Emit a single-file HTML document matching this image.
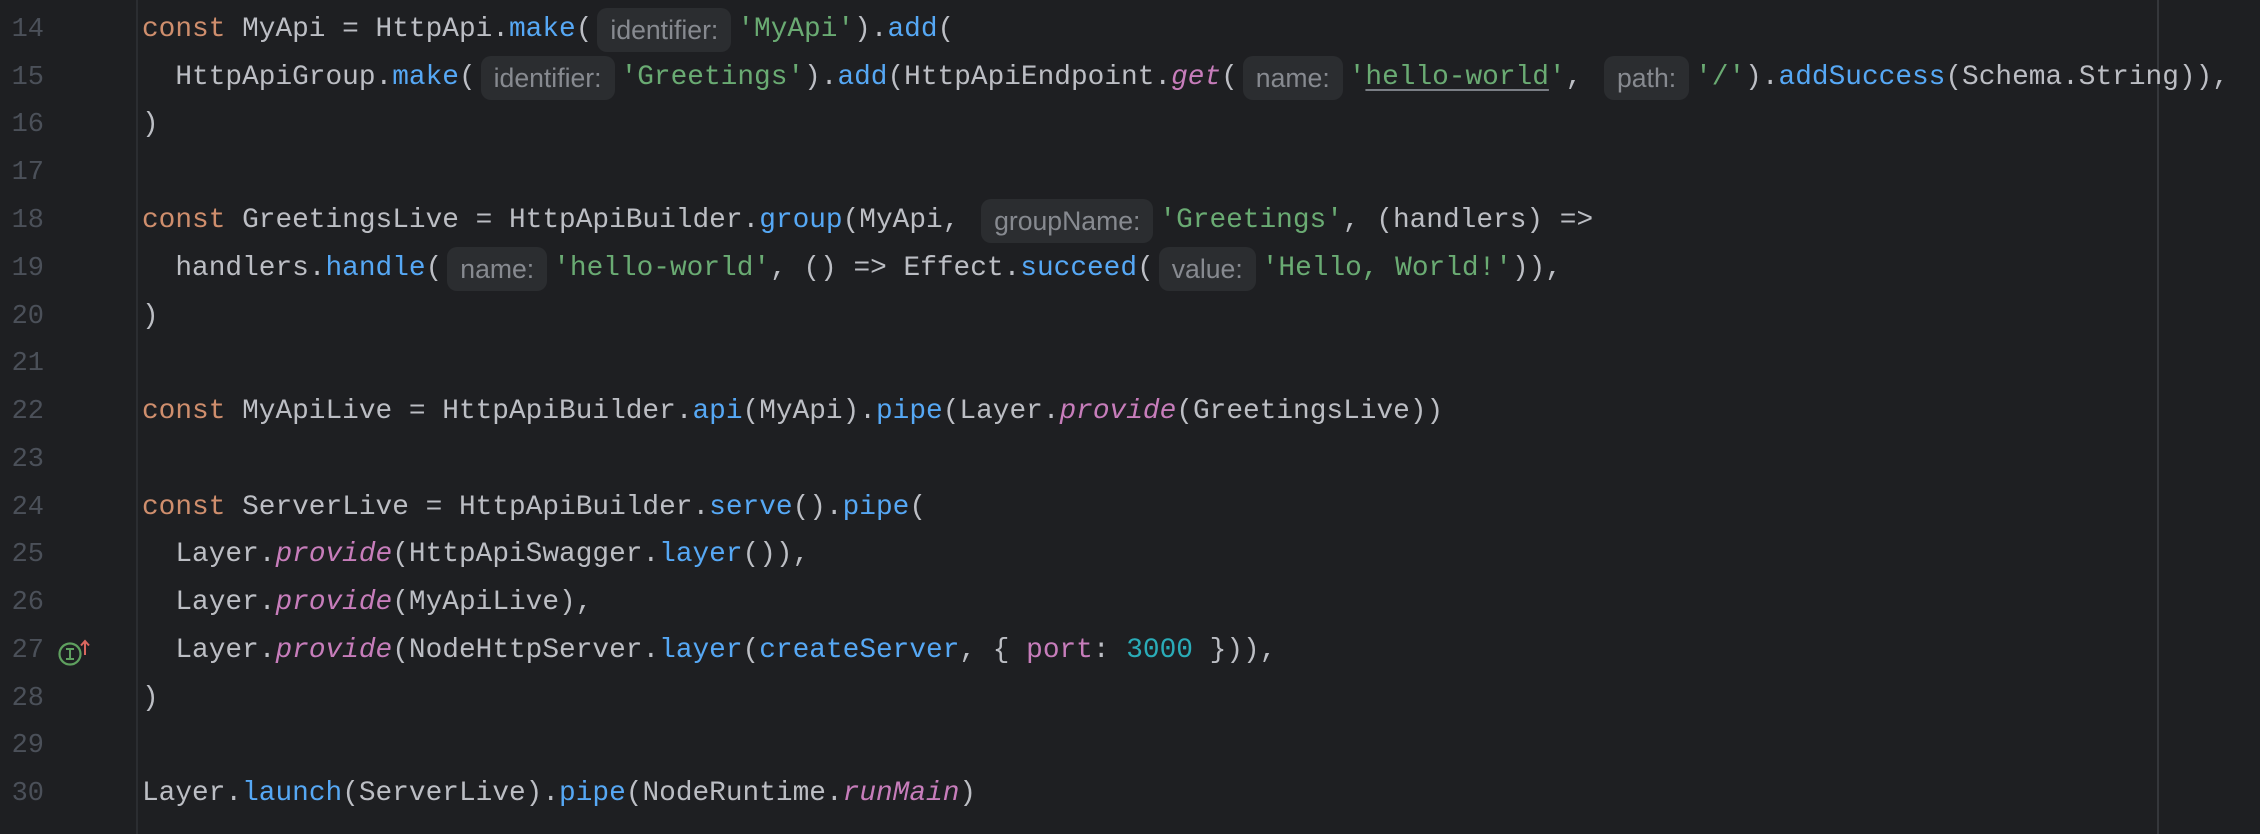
<!DOCTYPE html>
<html><head><meta charset="utf-8">
<style>
html,body{margin:0;padding:0;}
body{width:2260px;height:834px;background:#1e1f22;position:relative;overflow:hidden;
font-family:"Liberation Mono","DejaVu Sans Mono",monospace;font-size:27.8px;color:#bcbec4;}
.gut{position:absolute;left:136px;top:0;width:2px;height:834px;background:#2b2d31;}
.marg{position:absolute;left:2157px;top:0;width:2px;height:834px;background:#35373b;}
.ln{position:absolute;left:0;width:44px;text-align:right;color:#4b5059;height:48px;line-height:48px;font-size:27px;}
.l{position:absolute;left:142px;height:48px;line-height:48px;white-space:pre;}
.k{color:#cf8e6d}.f{color:#56a8f5}.s{color:#6aab73}.p{color:#c77dbb;font-style:italic}.n{color:#2aacb8}.pr{color:#c77dbb}
.u{text-decoration:underline;text-decoration-color:#7a7e85;text-underline-offset:5px;text-decoration-thickness:2px}
.h{display:inline-block;font-family:"Liberation Sans",sans-serif;font-size:26.6px;color:#878a90;background:#2b2d30;
border-radius:10px;height:44px;line-height:44px;padding:0 13px;margin:2px 6px 0 5px;vertical-align:top;}
</style></head><body>
<div class="gut"></div><div class="marg"></div>

<div class="ln" style="top:6px">14</div>
<div class="ln" style="top:54px">15</div>
<div class="ln" style="top:101px">16</div>
<div class="ln" style="top:149px">17</div>
<div class="ln" style="top:197px">18</div>
<div class="ln" style="top:245px">19</div>
<div class="ln" style="top:293px">20</div>
<div class="ln" style="top:340px">21</div>
<div class="ln" style="top:388px">22</div>
<div class="ln" style="top:436px">23</div>
<div class="ln" style="top:484px">24</div>
<div class="ln" style="top:531px">25</div>
<div class="ln" style="top:579px">26</div>
<div class="ln" style="top:627px">27</div>
<div class="ln" style="top:675px">28</div>
<div class="ln" style="top:722px">29</div>
<div class="ln" style="top:770px">30</div>

<svg style="position:absolute;left:56px;top:638px" width="40" height="30" viewBox="0 0 40 30">
<circle cx="14" cy="16" r="10.5" fill="none" stroke="#5fa05f" stroke-width="2.2"/>
<path d="M10 11h8M14 11v10M10 21h8" stroke="#5fa05f" stroke-width="2" fill="none"/>
<path d="M29 17V3M25 7.5l4-4.5 4 4.5" stroke="#d9675f" stroke-width="2" fill="none"/>
</svg>

<div class="l" style="top:6px"><span class="k">const</span> MyApi = HttpApi.<span class="f">make</span>(<span class="h">identifier:</span><span class="s">'MyApi'</span>).<span class="f">add</span>(</div>
<div class="l" style="top:54px">  HttpApiGroup.<span class="f">make</span>(<span class="h">identifier:</span><span class="s">'Greetings'</span>).<span class="f">add</span>(HttpApiEndpoint.<span class="p">get</span>(<span class="h">name:</span><span class="s">'<span class="u">hello-world</span>'</span>, <span class="h">path:</span><span class="s">'/'</span>).<span class="f">addSuccess</span>(Schema.String)),</div>
<div class="l" style="top:101px">)</div>
<div class="l" style="top:197px"><span class="k">const</span> GreetingsLive = HttpApiBuilder.<span class="f">group</span>(MyApi, <span class="h">groupName:</span><span class="s">'Greetings'</span>, (handlers) =&gt;</div>
<div class="l" style="top:245px">  handlers.<span class="f">handle</span>(<span class="h">name:</span><span class="s">'hello-world'</span>, () =&gt; Effect.<span class="f">succeed</span>(<span class="h">value:</span><span class="s">'Hello, World!'</span>)),</div>
<div class="l" style="top:293px">)</div>
<div class="l" style="top:388px"><span class="k">const</span> MyApiLive = HttpApiBuilder.<span class="f">api</span>(MyApi).<span class="f">pipe</span>(Layer.<span class="p">provide</span>(GreetingsLive))</div>
<div class="l" style="top:484px"><span class="k">const</span> ServerLive = HttpApiBuilder.<span class="f">serve</span>().<span class="f">pipe</span>(</div>
<div class="l" style="top:531px">  Layer.<span class="p">provide</span>(HttpApiSwagger.<span class="f">layer</span>()),</div>
<div class="l" style="top:579px">  Layer.<span class="p">provide</span>(MyApiLive),</div>
<div class="l" style="top:627px">  Layer.<span class="p">provide</span>(NodeHttpServer.<span class="f">layer</span>(<span class="f">createServer</span>, { <span class="pr">port</span>: <span class="n">3000</span> })),</div>
<div class="l" style="top:675px">)</div>
<div class="l" style="top:770px">Layer.<span class="f">launch</span>(ServerLive).<span class="f">pipe</span>(NodeRuntime.<span class="p">runMain</span>)</div>
</body></html>
